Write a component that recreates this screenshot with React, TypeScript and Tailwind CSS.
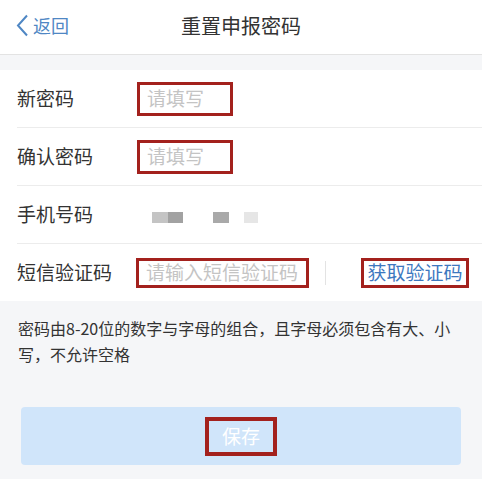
import React from 'react'

const font = { fontFamily: '"Noto Sans CJK SC", "Noto Sans", sans-serif' }

function Row({ label, children, last }: { label: string; children?: React.ReactNode; last?: boolean }) {
  return (
    <div className={`ml-[17px] flex items-center ${last ? 'h-[57px]' : 'h-[58px] border-b border-[#ececec]'}`}>
      <div className="w-[120px] shrink-0 text-[19px] text-[#333]">{label}</div>
      {children}
    </div>
  )
}

export default function App() {
  return (
    <div className="h-[479px] w-[482px] overflow-hidden bg-[#f5f6f8]" style={font}>
      {/* header */}
      <div className="relative flex h-[55px] items-center justify-center border-b border-[#e3e3e3] bg-white">
        <div className="absolute left-[15px] top-[13px] flex items-center gap-[3px] text-[18px] text-[#4f87c4]">
          <svg width="15" height="23" viewBox="0 0 15 23">
            <polyline points="12,1.5 3,11.5 12,21.5" fill="none" stroke="#4f87c4" strokeWidth="2" />
          </svg>
          <span className="leading-[24px]">返回</span>
        </div>
        <div className="pb-[3px] text-[20px] text-[#333]">重置申报密码</div>
      </div>

      <div className="h-[15px]" />

      <div className="bg-white">
        <Row label="新密码">
          <span className="flex h-[34px] w-[96px] items-center border-[3px] border-[#a3211d] pl-[7px] text-[19px] text-[#c4c4c4]">
            请填写
          </span>
        </Row>
        <Row label="确认密码">
          <span className="flex h-[34px] w-[96px] items-center border-[3px] border-[#a3211d] pl-[7px] text-[19px] text-[#c4c4c4]">
            请填写
          </span>
        </Row>
        <Row label="手机号码">
          <div className="mt-[5px] flex items-center">
            <span className="ml-[15px] h-[11px] w-[16px] bg-[#c4c4c4]" />
            <span className="h-[11px] w-[15px] bg-[#a2a2a2]" />
            <span className="ml-[30px] h-[11px] w-[16px] bg-[#a9a9a9]" />
            <span className="ml-[15px] h-[11px] w-[14px] bg-[#e6e6e6]" />
          </div>
        </Row>
        <Row label="短信验证码" last>
          <span className="-ml-[1px] flex h-[30px] w-[173px] items-center border-[3px] border-[#a3211d] pl-[7px] text-[19px] whitespace-nowrap text-[#c4c4c4]">
            请输入短信验证码
          </span>
          <span className="ml-[16px] h-[24px] w-px bg-[#e3e3e3]" />
          <span className="ml-[35px] flex h-[30px] w-[108px] items-center justify-center border-[3px] border-[#a3211d] text-[19px] whitespace-nowrap text-[#3d78bf]">
            获取验证码
          </span>
        </Row>
      </div>

      <p className="px-[18px] pt-[14px] text-[16px] leading-[26px] text-[#333]">
        密码由8-20位的数字与字母的组合，且字母必须包含有大、小写，不允许空格
      </p>

      <div className="mx-[21px] mt-[40px] flex h-[58px] items-center justify-center rounded-[4px] bg-[#d0e5fa]">
        <span className="flex h-[39px] w-[72px] items-center justify-center border-[4px] border-[#a3211d] text-[19px] text-white">
          保存
        </span>
      </div>
    </div>
  )
}
